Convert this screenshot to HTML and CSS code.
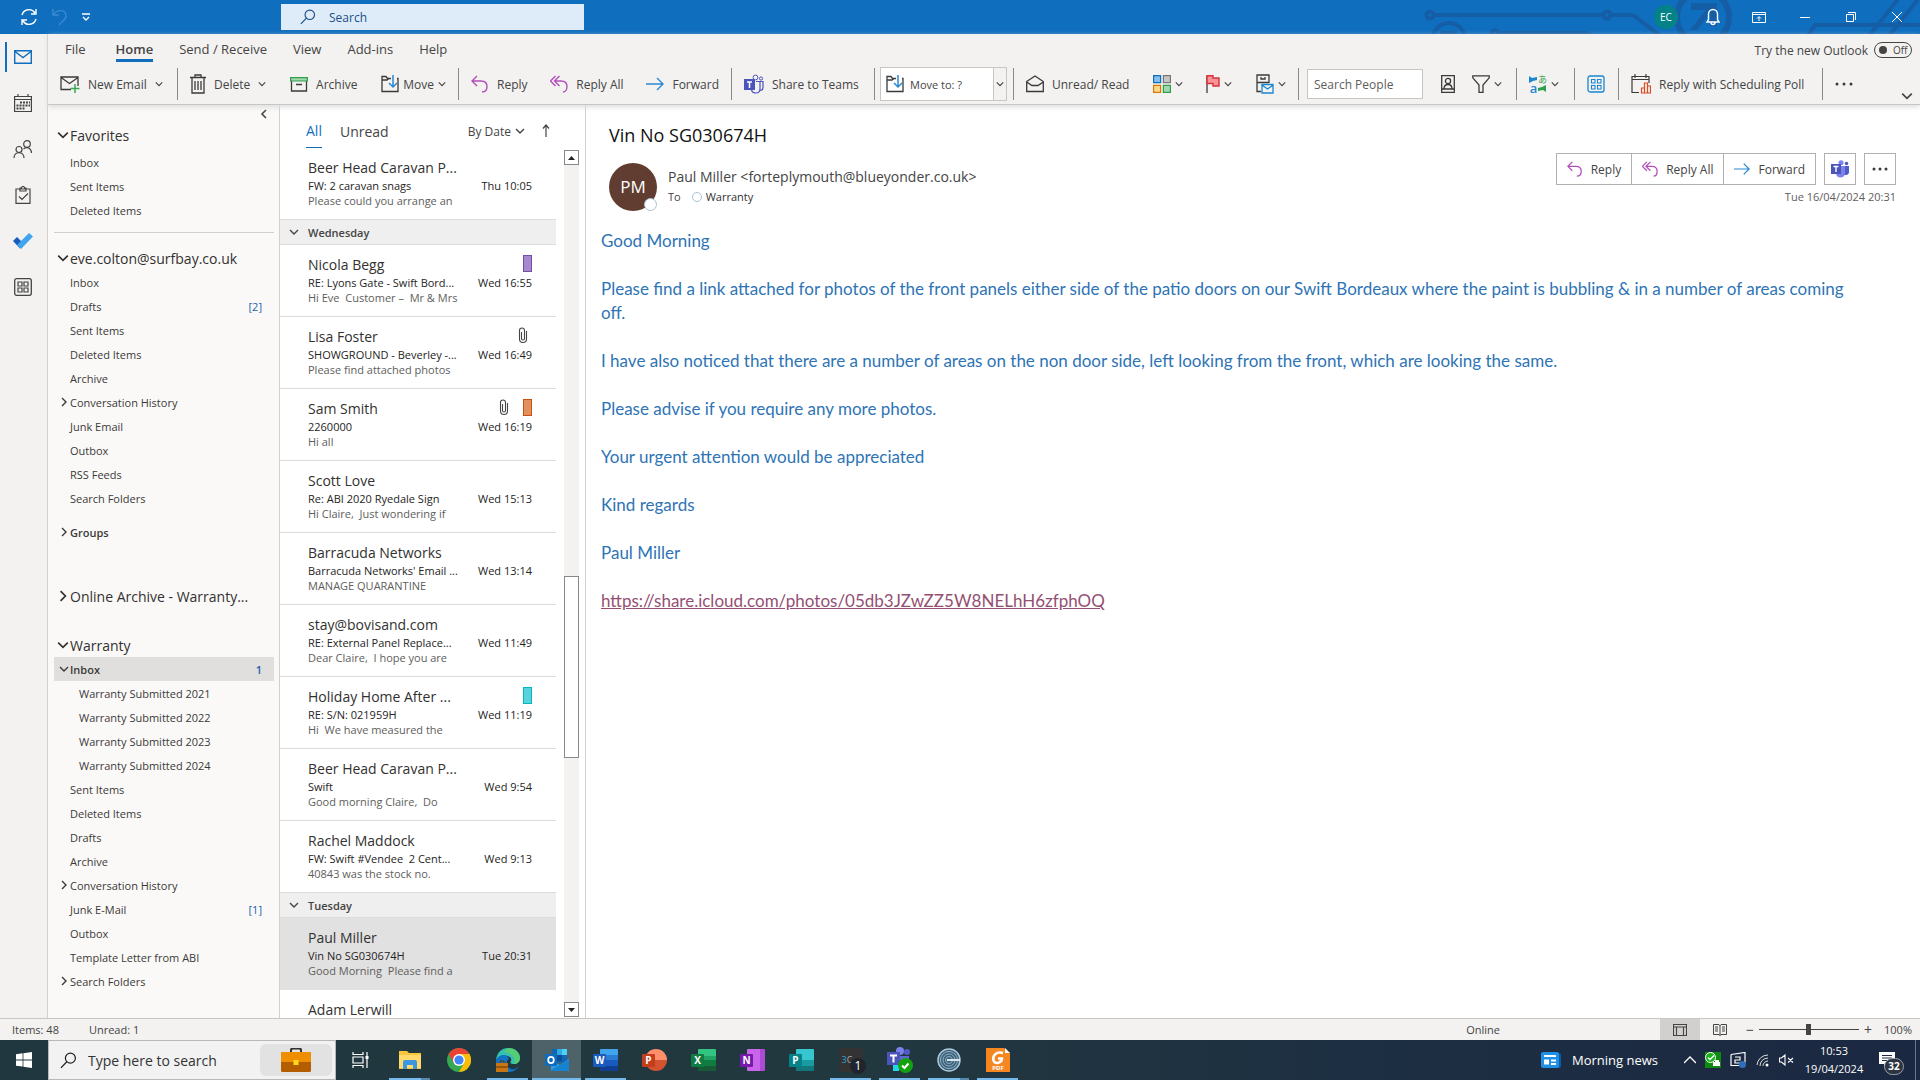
FILE: index.html
```html
<!DOCTYPE html>
<html lang="en">
<head>
  <meta charset="utf-8">
  <title>Warranty - Outlook</title>
  <link rel="stylesheet" href="styles.css">
</head>
<body>

<!-- shared icons -->
<svg class="sprite" aria-hidden="true">
  <symbol id="chev-down" viewBox="0 0 10 10"><path d="M1 3l4 4 4-4" fill="none" stroke="currentColor" stroke-width="1.4"/></symbol>
  <symbol id="chev-right" viewBox="0 0 10 10"><path d="M3 1l4 4-4 4" fill="none" stroke="currentColor" stroke-width="1.4"/></symbol>
  <symbol id="reply" viewBox="0 0 18 18"><path d="M6 1L1 6l5 5M1 6h9c4 0 6 2 6 5.500s-2 5.500-5 5.500" fill="none" stroke="#b04fb8" stroke-width="1.400"/></symbol>
  <symbol id="reply-all" viewBox="0 0 18 18"><path d="M5.500 1l-5 5 5 5M9.500 1l-5 5 5 5M5 6h6c4 0 6 2 6 5.500s-2 5.500-4 5.500" fill="none" stroke="#b04fb8" stroke-width="1.400"/></symbol>
  <symbol id="forward" viewBox="0 0 18 18"><path d="M0 9h17M11 3l6 6-6 6" fill="none" stroke="#2b88d0" stroke-width="1.400"/></symbol>
  <symbol id="move" viewBox="0 0 18 18"><path d="M10 3.500H6.500L5 1.500H1v15h16v-13h-1M1 5h5l2-1.500" fill="none" stroke="#3b3a39" stroke-width="1.300"/><path d="M12 0v12M8 8l4 4 4-4" fill="none" stroke="#2b88d0" stroke-width="1.500"/></symbol>
  <symbol id="clip" viewBox="0 0 10 17"><path d="M3.500 5v6.500a1.500 1.500 0 0 0 3 0V3.500a2.500 2.500 0 0 0-5 0V12a3.500 3.500 0 0 0 7 0V4" fill="none" stroke="#444" stroke-width="1.100"/></symbol>
  <symbol id="magnifier" viewBox="0 0 18 18"><circle cx="11" cy="6.500" r="5.300" fill="none" stroke="currentColor" stroke-width="1.300"/><path d="M7.200 10.300L1 16.800" fill="none" stroke="currentColor" stroke-width="1.300"/></symbol>
  <symbol id="teams" viewBox="0 0 20 20"><circle cx="11.500" cy="3.500" r="2.400" fill="none" stroke="#4b53bc"/><circle cx="17" cy="4.500" r="1.600" fill="none" stroke="#4b53bc"/><path d="M12 7.500h4v7c0 3-2 4.500-4 4.500s-4-1-4.500-3M16 7.500h3v6c0 2-1 3-3 3" fill="none" stroke="#4b53bc" stroke-width="1.200"/><path d="M0 5h11v11H0z" fill="#4b53bc"/><path d="M3 8h5M5.500 8v6" stroke="#fff" stroke-width="1.500"/></symbol>
</svg>

<header class="titlebar">
  <svg class="circuit" viewBox="0 0 500 34" aria-hidden="true">
    <g fill="none" stroke="#155ea6" stroke-width="4">
      <circle cx="10" cy="15" r="3.500"/><path d="M14 15h169M191 15h19q4 0 7 3l26 20M80 33h85l10 3"/><circle cx="187" cy="15" r="3.500"/><circle cx="29" cy="39" r="16"/><circle cx="75" cy="34" r="3.500"/><path d="M20 33h17"/><circle cx="283" cy="17" r="26" stroke-width="6"/>
      <path d="M386 38l9-13h105M449 36l30-38M469 36l30-38" stroke-width="4"/>
    </g>
    <path d="M271 3h26v23h-7V14l-13 16h-7l16-20h-15z" fill="#155ea6"/>
  </svg>
  <div class="quick">
    <button aria-label="Send/Receive all folders"><svg width="18" height="18" viewBox="0 0 18 18"><path d="M2 7a7.200 7.200 0 0 1 13-2M16 1v5h-5M16 11a7.200 7.200 0 0 1-13 2M2 17v-5h5" fill="none" stroke="#fff" stroke-width="1.400"/></svg></button>
    <button aria-label="Undo"><svg width="16" height="18" viewBox="0 0 16 18"><path d="M1 1v6h6M1 7c4-6 13-6 13 1 0 4-4 5-7 9" fill="none" stroke="#3b8ad2" stroke-width="1.400"/></svg></button>
    <button aria-label="Customize toolbar"><svg width="8" height="8" viewBox="0 0 8 8"><path d="M0 1h8M1 4l3 3 3-3" fill="none" stroke="#fff" stroke-width="1.300"/></svg></button>
  </div>
  <label class="top-search">
    <svg width="16" height="16"><use href="#magnifier"/></svg>
    <input type="text" placeholder="Search" aria-label="Search">
  </label>
  <div class="window-tools">
    <span class="account">EC</span>
    <button aria-label="Notifications"><svg width="14" height="18" viewBox="0 0 14 18"><path d="M1 14l1.500-2.500V6a4.500 4.500 0 0 1 9 0v5.500L13 14zM5 14.500a2 2 0 0 0 4 0" fill="none" stroke="#fff" stroke-width="1.400"/></svg></button>
    <button aria-label="Ribbon display"><svg width="14" height="11" viewBox="0 0 14 11"><path d="M.5.5h13v10H.5zM.5 2.500h13M7 9V5M5 6.500l2-2 2 2" fill="none" stroke="#fff"/></svg></button>
    <button aria-label="Minimize"><svg width="10" height="10" viewBox="0 0 10 10"><path d="M0 5.500h10" stroke="#fff"/></svg></button>
    <button aria-label="Restore"><svg width="10" height="10" viewBox="0 0 10 10"><path d="M.5 2.500h7v7h-7zM2 .5h7.500V8" fill="none" stroke="#fff"/></svg></button>
    <button aria-label="Close"><svg width="10" height="10" viewBox="0 0 10 10"><path d="M0 0l10 10M10 0L0 10" stroke="#fff"/></svg></button>
  </div>
</header>

<div class="app">
  <nav class="rail">
    <button class="active" aria-label="Mail"><svg width="18" height="14" viewBox="0 0 18 14"><path d="M.7.7h16.600v12.600H.7zM1 1.500l8 6 8-6" fill="none" stroke="#106ebe" stroke-width="1.400"/></svg></button>
    <button aria-label="Calendar"><svg width="18" height="18" viewBox="0 0 18 18"><path d="M.6 2.500h16.800v15H.6zM.6 5.500h16.800M4 0v3M14 0v3" fill="none" stroke="#444" stroke-width="1.200"/><path d="M6 8.500h10M2.500 11.500H16M2.500 14.500h8" stroke="#444" stroke-width="2" stroke-dasharray="2 1"/></svg></button>
    <button aria-label="People"><svg width="20" height="18" viewBox="0 0 20 18"><g fill="none" stroke="#444" stroke-width="1.200"><circle cx="14" cy="4" r="3.300"/><circle cx="6" cy="9.500" r="3"/><path d="M1 18c0-7 10-7 10 0M10.500 9c3-3 8-1 8 4"/></g></svg></button>
    <button aria-label="Tasks"><svg width="16" height="18" viewBox="0 0 16 18"><path d="M1 3h14v14.400H1zM5 5V2h1.500a1.500 1.500 0 0 1 3 0H11v3zM4 10.500l3 3 6-6" fill="none" stroke="#444" stroke-width="1.200"/></svg></button>
    <button aria-label="To Do"><svg width="20" height="16" viewBox="0 0 20 16"><path d="M0 8l4-4 7 7-4 4.500z" fill="#185abd"/><path d="M4 12L16 0l4 3.500L8 16z" fill="#41a5ee"/></svg></button>
    <button aria-label="More apps"><svg width="18" height="18" viewBox="0 0 18 18"><rect x=".7" y=".7" width="16.600" height="16.600" rx="2" fill="none" stroke="#444" stroke-width="1.300"/><path d="M4 4h4v4H4zM10 4h4v4h-4zM4 10h4v4H4zM10 10h4v4h-4z" fill="none" stroke="#444" stroke-width="1.200"/></svg></button>
  </nav>

  <div class="workspace">
    <div class="ribbon">
      <div class="tabs">
        <button>File</button>
        <button class="current">Home</button>
        <button>Send / Receive</button>
        <button>View</button>
        <button>Add-ins</button>
        <button>Help</button>
        <label class="try-new">Try the new Outlook <input type="checkbox"><span class="toggle">Off</span></label>
      </div>
      <div class="commands">
        <div class="group">
          <button><svg width="20" height="20" viewBox="0 0 20 20"><path d="M11 15.500H1V3h17v9M1 3.500l8.500 6 8.500-6" fill="none" stroke="#3b3a39" stroke-width="1.300"/><path d="M15 10v9M10.500 14.500h9" stroke="#3aa757" stroke-width="1.500"/></svg>New Email <svg class="chev"><use href="#chev-down"/></svg></button>
        </div>
        <div class="group">
          <button><svg width="16" height="20" viewBox="0 0 16 20"><path d="M0 3.500h16M5 3V1h6v2M2 4v15h12V4M5 7v9M8 7v9M11 7v9" fill="none" stroke="#3b3a39" stroke-width="1.300"/></svg>Delete <svg class="chev"><use href="#chev-down"/></svg></button>
          <button><svg width="18" height="16" viewBox="0 0 18 16"><path d="M1.500 5v10h15V5M6 8.500h6" fill="none" stroke="#3b3a39" stroke-width="1.300"/><path d="M.6 1.600h16.800V5H.6z" fill="#a0d8ae" stroke="#2f9e4f" stroke-width="1.200"/></svg>Archive</button>
          <button class="tight"><svg width="18" height="18"><use href="#move"/></svg>Move <svg class="chev"><use href="#chev-down"/></svg></button>
        </div>
        <div class="group">
          <button><svg width="18" height="18"><use href="#reply"/></svg>Reply</button>
          <button><svg width="18" height="18"><use href="#reply-all"/></svg>Reply All</button>
          <button><svg width="18" height="18"><use href="#forward"/></svg>Forward</button>
        </div>
        <div class="group">
          <button><svg width="20" height="20"><use href="#teams"/></svg>Share to Teams</button>
        </div>
        <div class="group group-box">
          <div class="move-to">
            <button><svg width="18" height="18"><use href="#move"/></svg>Move to: ?</button>
            <button class="drop" aria-label="More quick steps"><svg class="chev"><use href="#chev-down"/></svg></button>
          </div>
        </div>
        <div class="group">
          <button><svg width="18" height="18" viewBox="0 0 18 18"><path d="M.7 6.500L9 1l8.300 5.500v10H.7zM.7 7L6 10.500h6L17.300 7" fill="none" stroke="#3b3a39" stroke-width="1.300"/></svg>Unread/ Read</button>
          <button class="icon-drop" aria-label="Categorize"><svg width="18" height="18" viewBox="0 0 18 18"><path d="M.6.6h7v7h-7z" fill="#83beec" stroke="#106ebe" stroke-width="1.200"/><path d="M10.400.6h7v7h-7z" fill="#c8c6c4" stroke="#797775" stroke-width="1.200"/><path d="M.6 10.400h7v7h-7z" fill="#f8d98c" stroke="#e07800" stroke-width="1.200"/><path d="M10.400 10.400h7v7h-7z" fill="#a0d8ae" stroke="#2f9e4f" stroke-width="1.200"/></svg><svg class="chev"><use href="#chev-down"/></svg></button>
          <button class="icon-drop" aria-label="Follow up"><svg width="14" height="18" viewBox="0 0 14 18"><path d="M1 1v17" stroke="#3b3a39" stroke-width="1.300"/><path d="M1 .7h6v2.300h6v8H7V8.500H1z" fill="#ff9199" stroke="#d13438" stroke-width="1.400"/></svg><svg class="chev"><use href="#chev-down"/></svg></button>
          <button class="icon-drop" aria-label="Rules"><svg width="18" height="20" viewBox="0 0 18 20"><path d="M5 17.500H1V1h12v8M1 8.500h12M5 3v2h4V3" fill="none" stroke="#3b3a39" stroke-width="1.300"/><path d="M6 10.500h11v8.500H6zM6 11l5.500 4 5.500-4" fill="none" stroke="#1a86d0" stroke-width="1.300"/></svg><svg class="chev"><use href="#chev-down"/></svg></button>
        </div>
        <div class="group group-box">
          <input class="people" type="text" placeholder="Search People" aria-label="Search People">
          <button aria-label="Address Book"><svg width="14" height="18" viewBox="0 0 14 18"><path d="M.7.7h12.600v16.600H.7zM.7 14h12.600M3 14c0-6 8-6 8 0" fill="none" stroke="#3b3a39" stroke-width="1.300"/><circle cx="7" cy="6" r="2.600" fill="none" stroke="#3b3a39" stroke-width="1.300"/></svg></button>
          <button class="icon-drop" aria-label="Filter Email"><svg width="18" height="18" viewBox="0 0 18 18"><path d="M.8.8h16.400v2L11 10v7.300H7V10L.8 2.800z" fill="none" stroke="#3b3a39" stroke-width="1.300"/></svg><svg class="chev"><use href="#chev-down"/></svg></button>
        </div>
        <div class="group">
          <button class="icon-drop translate" aria-label="Translate"><span class="letters"><svg width="8" height="7" viewBox="0 0 8 7"><path d="M0 0l3 2 5-1v3L4 5 0 7z" fill="#1a86d0"/></svg><span class="tr-b">あ</span><span class="tr-a">a</span><svg width="8" height="7" viewBox="0 0 8 7"><path d="M8 7L5 5 0 6V3l4-1 4-2z" fill="#2f9e4f"/></svg></span><svg class="chev"><use href="#chev-down"/></svg></button>
        </div>
        <div class="group">
          <button aria-label="Get Add-ins"><svg width="18" height="18" viewBox="0 0 18 18"><rect x="1" y="1" width="16" height="16" rx="2" fill="none" stroke="#1a86d0" stroke-width="1.300"/><path d="M4.500 4.500h3.500v3.500H4.500zM10.500 4.500H14v3.500h-3.500zM4.500 10.500h3.500V14H4.500zM10.500 10.500H14V14h-3.500z" fill="none" stroke="#1a86d0" stroke-width="1.100"/></svg></button>
        </div>
        <div class="group">
          <button><svg width="20" height="20" viewBox="0 0 20 20"><path d="M8 18.500H1V2.500h17V9M1 5.500h17M4 0v4M15 0v4" fill="none" stroke="#3b3a39" stroke-width="1.200"/><path d="M10.500 19v-5h3v5M13.500 19V9h3v10M16.500 19v-7h3v7zM10 19h9" fill="none" stroke="#e0481d" stroke-width="1.200"/></svg>Reply with Scheduling Poll</button>
        </div>
        <div class="group last">
          <button aria-label="More commands"><svg width="18" height="4" viewBox="0 0 18 4"><g fill="#3b3a39"><circle cx="2" cy="2" r="1.500"/><circle cx="9" cy="2" r="1.500"/><circle cx="16" cy="2" r="1.500"/></g></svg></button>
          <button class="collapse" aria-label="Collapse ribbon"><svg width="12" height="12"><use href="#chev-down"/></svg></button>
        </div>
      </div>
    </div>

    <div class="panes">
      <nav class="folders">
        <button class="fold-pane" aria-label="Minimize folder pane"><svg width="8" height="10" viewBox="0 0 8 10"><path d="M6 1L2 5l4 4" fill="none" stroke="#444" stroke-width="1.600"/></svg></button>
        <h2><svg><use href="#chev-down"/></svg>Favorites</h2>
        <ul class="favorites">
          <li><a href="#">Inbox</a></li>
          <li><a href="#">Sent Items</a></li>
          <li><a href="#">Deleted Items</a></li>
        </ul>
        <hr>
        <h2><svg><use href="#chev-down"/></svg>eve.colton@surfbay.co.uk</h2>
        <ul>
          <li><a href="#">Inbox</a></li>
          <li><a href="#">Drafts</a><span>[2]</span></li>
          <li><a href="#">Sent Items</a></li>
          <li><a href="#">Deleted Items</a></li>
          <li><a href="#">Archive</a></li>
          <li><svg><use href="#chev-right"/></svg><a href="#">Conversation History</a></li>
          <li><a href="#">Junk Email</a></li>
          <li><a href="#">Outbox</a></li>
          <li><a href="#">RSS Feeds</a></li>
          <li><a href="#">Search Folders</a></li>
          <li class="groups"><svg><use href="#chev-right"/></svg><a href="#">Groups</a></li>
        </ul>
        <h2 class="archive"><svg><use href="#chev-right"/></svg>Online Archive - Warranty...</h2>
        <h2><svg><use href="#chev-down"/></svg>Warranty</h2>
        <ul>
          <li class="selected"><svg><use href="#chev-down"/></svg><a href="#">Inbox</a><span>1</span></li>
          <li class="sub"><a href="#">Warranty Submitted 2021</a></li>
          <li class="sub"><a href="#">Warranty Submitted 2022</a></li>
          <li class="sub"><a href="#">Warranty Submitted 2023</a></li>
          <li class="sub"><a href="#">Warranty Submitted 2024</a></li>
          <li><a href="#">Sent Items</a></li>
          <li><a href="#">Deleted Items</a></li>
          <li><a href="#">Drafts</a></li>
          <li><a href="#">Archive</a></li>
          <li><svg><use href="#chev-right"/></svg><a href="#">Conversation History</a></li>
          <li><a href="#">Junk E-Mail</a><span>[1]</span></li>
          <li><a href="#">Outbox</a></li>
          <li><a href="#">Template Letter from ABI</a></li>
          <li><svg><use href="#chev-right"/></svg><a href="#">Search Folders</a></li>
        </ul>
      </nav>

      <section class="messages">
        <div class="list-head">
          <button class="on">All</button>
          <button>Unread</button>
          <button class="sort">By Date <svg width="10" height="10"><use href="#chev-down"/></svg></button>
          <button class="order" aria-label="Sort order"><svg width="8" height="14" viewBox="0 0 8 14"><path d="M4 13V1M1 4.500L4 1l3 3.500" fill="none" stroke="#444" stroke-width="1.200"/></svg></button>
        </div>
        <div class="list-body">
          <div class="list">
            <article class="msg"><h3>Beer Head Caravan P...</h3><p class="subject">FW: 2 caravan snags</p><time>Thu 10:05</time><p class="preview">Please could you arrange an</p></article>
            <div class="day"><svg width="10" height="10"><use href="#chev-down"/></svg>Wednesday</div>
            <article class="msg"><h3>Nicola Begg</h3><span class="marks"><i class="cat purple"></i></span><p class="subject">RE: Lyons Gate - Swift Bord...</p><time>Wed 16:55</time><p class="preview">Hi Eve  Customer –  Mr &amp; Mrs</p></article>
            <article class="msg"><h3>Lisa Foster</h3><span class="marks only-clip"><svg width="10" height="17"><use href="#clip"/></svg></span><p class="subject">SHOWGROUND - Beverley -...</p><time>Wed 16:49</time><p class="preview">Please find attached photos</p></article>
            <article class="msg"><h3>Sam Smith</h3><span class="marks"><svg width="10" height="17"><use href="#clip"/></svg><i class="cat orange"></i></span><p class="subject">2260000</p><time>Wed 16:19</time><p class="preview">Hi all</p></article>
            <article class="msg"><h3>Scott Love</h3><p class="subject">Re: ABI 2020 Ryedale Sign</p><time>Wed 15:13</time><p class="preview">Hi Claire,  Just wondering if</p></article>
            <article class="msg"><h3>Barracuda Networks</h3><p class="subject">Barracuda Networks' Email ...</p><time>Wed 13:14</time><p class="preview">MANAGE QUARANTINE</p></article>
            <article class="msg"><h3>stay@bovisand.com</h3><p class="subject">RE: External Panel Replace...</p><time>Wed 11:49</time><p class="preview">Dear Claire,  I hope you are</p></article>
            <article class="msg"><h3>Holiday Home After ...</h3><span class="marks"><i class="cat teal"></i></span><p class="subject">RE: S/N: 021959H</p><time>Wed 11:19</time><p class="preview">Hi  We have measured the</p></article>
            <article class="msg"><h3>Beer Head Caravan P...</h3><p class="subject">Swift</p><time>Wed 9:54</time><p class="preview">Good morning Claire,  Do</p></article>
            <article class="msg"><h3>Rachel Maddock</h3><p class="subject">FW: Swift #Vendee  2 Cent...</p><time>Wed 9:13</time><p class="preview">40843 was the stock no.</p></article>
            <div class="day"><svg width="10" height="10"><use href="#chev-down"/></svg>Tuesday</div>
            <article class="msg open"><h3>Paul Miller</h3><p class="subject">Vin No SG030674H</p><time>Tue 20:31</time><p class="preview">Good Morning  Please find a</p></article>
            <article class="msg"><h3>Adam Lerwill</h3></article>
          </div>
          <div class="scrollbar">
            <button aria-label="Scroll up"><svg width="7" height="4" viewBox="0 0 7 4"><path d="M0 4l3.500-4L7 4z" fill="#222"/></svg></button>
            <div class="track"><div class="thumb"></div></div>
            <button aria-label="Scroll down"><svg width="7" height="4" viewBox="0 0 7 4"><path d="M0 0l3.500 4L7 0z" fill="#222"/></svg></button>
          </div>
        </div>
      </section>

      <main class="reading">
        <h1>Vin No SG030674H</h1>
        <div class="mail-head">
          <div class="avatar">PM<i class="presence"></i></div>
          <div class="from">
            <p class="sender">Paul Miller &lt;forteplymouth@blueyonder.co.uk&gt;</p>
            <p class="to">To <i class="dot"></i><b>Warranty</b></p>
          </div>
          <div class="mail-tools">
            <div class="actions">
              <div class="joined">
                <button><svg width="16" height="16"><use href="#reply"/></svg>Reply</button>
                <button><svg width="16" height="16"><use href="#reply-all"/></svg>Reply All</button>
                <button><svg width="16" height="16"><use href="#forward"/></svg>Forward</button>
              </div>
              <button class="square" aria-label="Share to Teams"><svg width="18" height="18" viewBox="0 0 18 18"><circle cx="10" cy="2.800" r="2.500" fill="#7b83eb"/><circle cx="15.500" cy="3.500" r="1.800" fill="#5059c9"/><path d="M13 6h5v6c0 2-1.500 3-3 3h-2z" fill="#5059c9"/><path d="M5 6h9v7c0 3-2 4.500-4.500 4.500S5 16 5 13z" fill="#7b83eb"/><path d="M0 4h10v10H0z" fill="#4b53bc"/><path d="M2.500 6.500h5M5 6.500v5.500" stroke="#fff" stroke-width="1.400"/></svg></button>
              <button class="square" aria-label="More actions"><svg width="16" height="4" viewBox="0 0 16 4"><g fill="#3b3a39"><circle cx="2" cy="2" r="1.500"/><circle cx="8" cy="2" r="1.500"/><circle cx="14" cy="2" r="1.500"/></g></svg></button>
            </div>
            <time>Tue 16/04/2024 20:31</time>
          </div>
        </div>
        <div class="mail-body">
          <p>Good Morning</p>
          <p>Please find a link attached for photos of the front panels either side of the patio doors on our Swift Bordeaux where the paint is bubbling &amp; in a number of areas coming off.</p>
          <p>I have also noticed that there are a number of areas on the non door side, left looking from the front, which are looking the same.</p>
          <p>Please advise if you require any more photos.</p>
          <p>Your urgent attention would be appreciated</p>
          <p>Kind regards</p>
          <p>Paul Miller</p>
          <p><a href="#">https://share.icloud.com/photos/05db3JZwZZ5W8NELhH6zfphOQ</a></p>
        </div>
      </main>
    </div>
  </div>
</div>

<footer class="status">
  <span>Items: 48</span>
  <span class="unread">Unread: 1</span>
  <span class="online">Online</span>
  <button class="view on" aria-label="Normal view"><svg width="14" height="12" viewBox="0 0 14 12"><path d="M.5.5h13v11H.5zM.5 3h13M3.500 3v8.500M10.500 3v8.500" fill="none" stroke="#444" stroke-width="1.100"/></svg></button>
  <button class="view" aria-label="Reading view"><svg width="14" height="12" viewBox="0 0 14 12"><path d="M.5.5H6l1 1 1-1h5.500v10H8l-1 1-1-1H.5zM7 1v11M2 3h3M2 5h3M2 7h3M9 3h3M9 5h3M9 7h3" fill="none" stroke="#444"/></svg></button>
  <button aria-label="Zoom out">−</button>
  <input type="range" min="10" max="190" value="100" aria-label="Zoom">
  <button aria-label="Zoom in">+</button>
  <span class="percent">100%</span>
</footer>

<div class="taskbar">
  <button class="start" aria-label="Start"><svg width="16" height="16" viewBox="0 0 16 16"><path d="M0 2.300L6.600 1.300v6.200H0zM7.400 1.200L16 0v7.500H7.400zM0 8.400h6.600v6.200L0 13.700zM7.400 8.400H16V16l-8.600-1.200z" fill="#fff"/></svg></button>
  <label class="task-search">
    <svg width="17" height="17"><use href="#magnifier"/></svg>
    <input type="text" placeholder="Type here to search" aria-label="Type here to search">
    <span class="highlight"><svg width="30" height="24" viewBox="0 0 30 24"><path d="M10 4V2c0-1 1-1.500 2-1.500h6c1 0 2 .5 2 1.500v2" fill="none" stroke="#333" stroke-width="2"/><rect y="4" width="30" height="20" rx="1.500" fill="#b35c00"/><path d="M0 5.500Q0 4 1.500 4h27Q30 4 30 5.500V14H0z" fill="#ef8e00"/><rect x="12.500" y="12" width="5" height="5" fill="#ffd91a"/></svg></span>
  </label>
  <div class="pinned">
    <button aria-label="Task View"><svg width="18" height="16" viewBox="0 0 18 16"><path d="M1 0v2.500h10V0M1 16v-2.500h10V16M1 5h10v6H1zM15 0v16" fill="none" stroke="#fff" stroke-width="1.200"/><path d="M13.500 4h3v3h-3z" fill="#fff"/></svg></button>
    <button class="run multi" aria-label="File Explorer"><svg width="24" height="20" viewBox="0 0 24 20"><path d="M1 1h8l2 2h12v16H1z" fill="#f8c63d"/><path d="M1 5h22v13H1z" fill="#ffd96b"/><path d="M5 19v-7q0-2 2-2h10q2 0 2 2v7h-4v-4H9v4z" fill="#3b97e0"/></svg></button>
    <button aria-label="Chrome"><svg width="24" height="24" viewBox="0 0 24 24"><circle cx="12" cy="12" r="12" fill="#34a853"/><path d="M12 0a12 12 0 0 1 10.400 6H12L6.800 15 1.600 6A12 12 0 0 1 12 0z" fill="#ea4335"/><path d="M22.400 6A12 12 0 0 1 12 24l5.200-9L17 8.500 12 6z" fill="#fbbc05"/><circle cx="12" cy="12" r="6" fill="#fff"/><circle cx="12" cy="12" r="4.600" fill="#4285f4"/></svg></button>
    <button class="run" aria-label="Edge"><svg width="24" height="24" viewBox="0 0 24 24"><path d="M0 12C1 4 6 0 12 0c8 0 12 5 12 10 0 4-3 6-6 6-4 0-4-2-3-3 2-5-9-9-15-1z" fill="#35c1b1"/><path d="M0 12C3 5 12 6 13 11c-3 1-4 8 2 10 3 1 6-1 8-3-3 5-7 6-11 6C5 24-.5 18 0 12z" fill="#1272c4"/><path d="M14 0c7 1 10 6 10 10 0 4-3 6-6 6 2-5-1-11-10-12 1-2 3-4 6-4z" fill="#62d25c" opacity=".7"/><rect y="15" width="12" height="9" fill="#c87512"/><path d="M4 15v-2h4v2M0 19h12" fill="none" stroke="#5e3408"/></svg></button>
    <button class="run current" aria-label="Outlook"><svg width="24" height="24" viewBox="0 0 24 24"><path d="M7 1h15v14H7z" fill="#1066b5"/><path d="M12 1h5v6h-5z" fill="#32a9e7"/><path d="M17 1h5v6h-5z" fill="#50d0f5"/><path d="M12 7h5v6h-5z" fill="#0a4f93"/><path d="M6 12l9 5 9-6v11q0 1-1 1H7q-1 0-1-1z" fill="#2a9fe5"/><path d="M6 22l18-10v10q0 1-1 1H7z" fill="#1583d0"/><rect y="6" width="12" height="12" rx="1" fill="#0f6cbd"/><ellipse cx="6" cy="12" rx="2.800" ry="3.200" fill="none" stroke="#fff" stroke-width="1.700"/></svg></button>
    <button class="run office word" aria-label="Word"><i>W</i></button>
    <button class="office ppt" aria-label="PowerPoint"><i>P</i></button>
    <button class="office excel" aria-label="Excel"><i>X</i></button>
    <button class="office onenote" aria-label="OneNote"><i>N</i></button>
    <button class="office publisher" aria-label="Publisher"><i>P</i></button>
    <button class="run phone" aria-label="3CX"><span><em>3</em>C</span><b>1</b></button>
    <button class="run" aria-label="Teams"><svg width="26" height="26" viewBox="0 0 26 26"><circle cx="13" cy="4" r="4" fill="#7b83eb"/><circle cx="20" cy="5" r="3" fill="#5059c9"/><path d="M8 9h14v8q-3 6-9 6-5-1-5-6z" fill="#6068d6"/><path d="M0 5h13v13H0z" fill="#4b53bc"/><path d="M3 8.500h7M6.500 8.500v7" stroke="#fff" stroke-width="2"/><path d="M6 18h6v6H6z" fill="#20d7e8"/><circle cx="18.500" cy="18.500" r="7.500" fill="#13a10e"/><path d="M15 18.500l2.500 2.500 4-4.500" fill="none" stroke="#fff" stroke-width="2"/></svg></button>
    <button class="run multi" aria-label="Remote client"><svg width="24" height="24" viewBox="0 0 24 24"><circle cx="12" cy="12" r="11" fill="#3d6076" stroke="#a9c9dc" stroke-width="1.500"/><g fill="none" stroke="#8fb3c8"><circle cx="12" cy="12" r="8.500"/><circle cx="12" cy="12" r="6"/><circle cx="12" cy="12" r="3.500"/></g><path d="M10 12h13" stroke="#d5e6f0" stroke-width="2"/></svg></button>
    <button class="run" aria-label="Foxit PDF"><svg width="24" height="24" viewBox="0 0 24 24"><path d="M0 0h18l6 5v19H0z" fill="#f6861f"/><path d="M19 0l5 5h-5z" fill="#fff"/><path d="M17 5c-7-2-11 3-9.500 7.500 2 4.500 8.500 2 8.500-2h-4" fill="none" stroke="#fff" stroke-width="2.500"/><text x="12" y="22" class="pdf">PDF</text></svg></button>
  </div>
  <div class="tray">
    <button class="news"><svg width="20" height="16" viewBox="0 0 20 16"><rect x="2" y="1" width="18" height="15" rx="2" fill="#0c59a4"/><rect width="18" height="16" rx="2" fill="#1f8fe8"/><path d="M3 4h12M10 8.500h5M10 12h5" stroke="#fff" stroke-width="2"/><rect x="3" y="7.500" width="5" height="5" fill="#fff"/></svg>Morning news</button>
    <svg width="12" height="8" viewBox="0 0 12 8"><path d="M0 7l6-6 6 6" fill="none" stroke="#fff" stroke-width="1.300"/></svg>
    <svg width="16" height="16" viewBox="0 0 16 16"><path d="M0 0h16v16H0z" fill="#0f8a10"/><circle cx="5.500" cy="5.500" r="5" fill="#18b41a" stroke="#fff"/><path d="M3 5.500l2 2 4-4" fill="none" stroke="#fff" stroke-width="1.300"/><path d="M8 10h7v4H8zM10 8h4v2h-4z" fill="#fff"/></svg>
    <svg width="17" height="16" viewBox="0 0 17 16"><path d="M1 2.500L15 .5v10M9 13.500H1v-11M5 5h5v3H5v3h6" fill="none" stroke="#fff" stroke-width="1.200"/><circle cx="12.500" cy="12.500" r="3.500" fill="#2f6fc0"/></svg>
    <svg width="14" height="14" viewBox="0 0 14 14"><path d="M1 12A11 11 0 0 1 12 2M4 13a8 8 0 0 1 8-8M7 13a5 5 0 0 1 5-5" fill="none" stroke="#ddd"/><circle cx="11" cy="12" r="1.500" fill="#fff"/></svg>
    <svg width="15" height="12" viewBox="0 0 15 12"><path d="M.5 4h2L6 1v10L2.500 8h-2zM9 4l5 4.500M14 4L9 8.500" fill="none" stroke="#fff" stroke-width="1.100"/></svg>
    <div class="clock">10:53<br>19/04/2024</div>
    <button class="action" aria-label="Notifications"><svg width="16" height="16" viewBox="0 0 16 16"><path d="M0 0h16v12H9l-4 4v-4H0z" fill="#fff"/><path d="M3 3.500h10M3 6h10M3 8.500h6" stroke="#1c2a40"/></svg><b>32</b></button>
  </div>
</div>

</body>
</html>
```

FILE: styles.css
```css
* {box-sizing: border-box}

body {
  margin: 0;
  height: 100vh;
  display: flex;
  flex-direction: column;
  overflow: hidden;
  font-family: "Open Sans", "Noto Sans", sans-serif;
  font-size: 12px;
  color: #444;
  background: #fff;
}

button {
  border: none;
  background: none;
  padding: 0;
  font: inherit;
  color: inherit;
  cursor: pointer;
}

h1, h2, h3, p, ul {
  margin: 0;
  padding: 0;
  font-weight: normal;
}

ul {list-style: none;}
a {color: inherit; text-decoration: none;}
i, em {font-style: normal;}
svg {display: block; flex: none;}
input {font: inherit; color: inherit;}
.sprite {position: absolute; width: 0; height: 0;}

/* title bar */
.titlebar {
  position: relative;
  display: flex;
  align-items: center;
  flex: none;
  height: 34px;
  background: #106ebe;
}

.circuit {
  position: absolute;
  right: 0;
  top: 0;
  width: 500px;
  height: 34px;
}

.quick {
  display: flex;
  align-items: center;
  gap: 14px;
  width: 281px;
  padding-left: 20px;
}

.top-search {
  display: flex;
  align-items: center;
  gap: 13px;
  width: 303px;
  height: 26px;
  padding-left: 19px;
  background: #deecf9;
  color: #1b4f86;
}

.top-search input, .task-search input {
  border: none;
  background: none;
  outline: none;
  padding: 0;
  min-width: 0;
  flex: 1;
}

.top-search input::placeholder {color: #1b4f86;}

.window-tools {
  position: relative;
  display: flex;
  align-items: center;
  margin-left: auto;
}

.window-tools button {
  width: 46px;
  height: 34px;
  display: flex;
  align-items: center;
  justify-content: center;
}

.account {
  width: 24px;
  height: 24px;
  margin-right: 12px;
  border-radius: 50%;
  background: #038387;
  color: #fff;
  font-size: 10px;
  line-height: 24px;
  text-align: center;
}

/* frame */
.app {
  display: flex;
  flex: 1;
  min-height: 0;
}

.rail {
  flex: none;
  width: 48px;
  padding-top: 8px;
  background: #f3f2f1;
  border-right: 1px solid #d2d0ce;
}

.rail button {
  display: flex;
  align-items: center;
  justify-content: center;
  width: 45px;
  height: 30px;
  margin-bottom: 16px;
}

.rail .active {
  width: 34px;
  margin-left: 5px;
  border-left: 2px solid #106ebe;
}

.workspace {
  flex: 1;
  min-width: 0;
  display: flex;
  flex-direction: column;
}

/* ribbon */
.ribbon {
  position: relative;
  flex: none;
  background: #f3f2f1;
  border-bottom: 1px solid #c8c6c4;
  box-shadow: 0 2px 5px #ddd;
  z-index: 1;
}

.tabs {
  display: flex;
  align-items: center;
  gap: 26px;
  height: 32px;
  padding: 0 8px 0 17px;
  font-size: 13px;
}

.tabs button {
  height: 24px;
  border-bottom: 3px solid transparent;
}

.tabs .current {
  border-color: #106ebe;
  font-weight: 600;
}

.tabs button:first-child {margin-right: 4px;}

.try-new {
  display: flex;
  align-items: center;
  gap: 6px;
  margin-left: auto;
  font-size: 12px;
}

.try-new input {
  position: absolute;
  opacity: 0;
}

.toggle {
  display: flex;
  align-items: center;
  gap: 6px;
  width: 38px;
  height: 16px;
  padding-left: 4px;
  border: 1px solid #444;
  border-radius: 8px;
  font-size: 10px;
}

.toggle::before {
  content: "";
  width: 8px;
  height: 8px;
  border-radius: 50%;
  background: #444;
}

.commands {
  display: grid;
  grid-template-columns: 130px 281px 273px 143px 139px 285px 218px 58px 44px 204px 1fr;
  padding: 2px 0 4px;
}

.group {
  display: flex;
  align-items: center;
  justify-content: space-between;
  height: 32px;
  padding: 0 12px;
  border-right: 1px solid #8a8886;
  white-space: nowrap;
}

.group button {
  display: flex;
  align-items: center;
  gap: 8px;
}

.group .tight, .group .icon-drop {gap: 4px;}
.chev {width: 8px; height: 8px;}
.group-box {padding: 0 6px 0 5px;}
.group-box .icon-drop {padding-right: 8px;}

.move-to {
  display: flex;
  flex: 1;
  height: 34px;
  border: 1px solid #c8c6c4;
  background: #fff;
}

.move-to button {flex: 1; padding-left: 5px; gap: 6px; font-size: 11px;}
.move-to .drop {flex: none; width: 13px; padding-left: 2px; border-left: 1px solid #c8c6c4; background: #f3f2f1;}

.people {
  width: 116px;
  height: 30px;
  margin-left: 3px;
  padding: 0 6px;
  border: 1px solid #c8c6c4;
  background: #fff;
}

.people::placeholder {color: #605e5c;}

.letters {
  display: grid;
  grid-template-columns: 9px 9px;
  grid-template-rows: 9px 9px;
  align-items: center;
  line-height: 9px;
}

.tr-a {color: #1a86d0; font-weight: 600; font-size: 13px;}
.tr-b {color: #2f9e4f; font-size: 9px; font-family: "Noto Sans CJK JP", sans-serif;}
.last {border: none; padding-right: 7px;}
.last .collapse {align-self: flex-end; height: 8px;}

/* folder pane */
.panes {
  display: flex;
  flex: 1;
  min-height: 0;
}

.folders {
  position: relative;
  flex: none;
  width: 232px;
  padding: 18px 5px 0 6px;
  background: #faf9f8;
  border-right: 1px solid #d2d0ce;
}

.fold-pane {
  position: absolute;
  right: 9px;
  top: 4px;
}

.folders h2, .folders li {
  display: flex;
  align-items: center;
  height: 24px;
  padding-left: 16px;
  font-size: 11px;
  color: #3b3a39;
}

.folders h2 {
  font-size: 14px;
  white-space: nowrap;
  color: #323130;
}

.folders svg {width: 10px; height: 10px; margin: 0 1px 0 -11px;}
.folders h2 svg {width: 12px; height: 12px; margin-left: -13px;}

.folders hr {
  margin: 10px 0 13px;
  border: none;
  border-top: 1px solid #d2d0ce;
}

.folders span {
  margin-left: auto;
  padding-right: 12px;
  color: #1f64ab;
}

.folders .favorites {margin-top: 3px;}
.folders .sub {padding-left: 25px;}
.folders .groups {margin-top: 10px; font-weight: 600;}
.folders .archive {margin: 40px 0 25px;}
.folders .selected {background: #e1dfdd; font-weight: 600;}

/* message list */
.messages {
  flex: none;
  width: 306px;
  display: flex;
  flex-direction: column;
  border-right: 1px solid #d2d0ce;
}

.list-head {
  display: flex;
  flex: none;
  align-items: center;
  height: 43px;
  padding: 12px 35px 0 26px;
  font-size: 14px;
}

.list-head button {
  height: 31px;
  padding-bottom: 3px;
  margin-right: 18px;
}

.list-head .on {
  color: #106ebe;
  border-bottom: 1px solid #106ebe;
}

.list-head .sort {
  display: flex;
  align-items: center;
  gap: 4px;
  margin-left: auto;
  margin-right: 17px;
  font-size: 12px;
}

.list-head .order {margin: 0;}

.list-body {
  display: flex;
  flex: 1;
  min-height: 0;
}

.list {
  flex: 1;
  overflow: hidden;
}

.msg {
  display: grid;
  grid-template-columns: 1fr auto;
  grid-template-rows: 20px 15px 15px;
  align-content: center;
  height: 72px;
  padding: 0 24px 2px 28px;
  border-bottom: 1px solid #dcdcdc;
  white-space: pre;
  font-size: 11px;
  line-height: 15px;
}

.msg h3 {
  grid-column: 1;
  font-size: 14px;
  line-height: 20px;
  color: #323130;
}

.msg p {grid-column: 1;}
.msg time {grid-column: 2; text-align: right; color: #252423;}
.subject {color: #252423;}
.preview {color: #605e5c;}

.marks {
  display: flex;
  justify-content: flex-end;
  gap: 14px;
  grid-column: 2;
}

.only-clip {padding-right: 4px;}

.cat {width: 9px; height: 17px; border: 1px solid;}
.purple {background: #a589cc; border-color: #744da9;}
.orange {background: #e3905f; border-color: #ca5010;}
.teal {background: #58d3db; border-color: #00b7c3;}

.open {background: #e1e1e1; border-color: #e1e1e1;}

.day {
  display: flex;
  align-items: center;
  gap: 9px;
  height: 25px;
  padding-left: 9px;
  background: #efefef;
  border-bottom: 1px solid #dcdcdc;
  font-size: 11px;
  font-weight: 600;
}

.scrollbar {
  display: flex;
  flex-direction: column;
  width: 15px;
  margin: 2px 6px 1px 8px;
  background: #f3f2f1;
}

.scrollbar button {
  display: flex;
  align-items: center;
  justify-content: center;
  height: 15px;
  border: 1px solid #8a8886;
  background: #fff;
}

.track {flex: 1; padding-top: 411px;}
.thumb {height: 182px; border: 1px solid #8a8886; background: #fff;}

/* reading pane */
.reading {
  flex: 1;
  min-width: 0;
  padding: 16px 24px 0 15px;
}

.reading h1 {
  padding-left: 8px;
  font-size: 18px;
  line-height: 28px;
  color: #111;
}

.mail-head {
  display: flex;
  height: 80px;
  padding: 4px 0 0 8px;
}

.avatar {
  position: relative;
  width: 48px;
  height: 48px;
  margin-top: 10px;
  border-radius: 50%;
  background: #603d30;
  color: #fff;
  font-size: 17px;
  line-height: 48px;
  text-align: center;
}

.presence {
  position: absolute;
  right: 0;
  bottom: 0;
  width: 13px;
  height: 13px;
  border: 1px solid #a9c3d3;
  border-radius: 50%;
  background: #fff;
}

.from {
  flex: 1;
  padding: 14px 0 0 11px;
}

.sender {font-size: 14px; line-height: 20px;}
.to {display: flex; align-items: center; font-size: 11px; line-height: 19px;}
.to b {font-weight: normal; color: #323130;}
.dot {width: 10px; height: 10px; margin: 0 4px 0 11px; border: 1px solid #a9c3d3; border-radius: 50%;}

.mail-tools {text-align: right; color: #605e5c; line-height: 23px; font-size: 11px;}
.actions {display: flex; gap: 8px;}

.joined {
  display: flex;
  border: 1px solid #b3b0ad;
}

.actions button {
  display: flex;
  align-items: center;
  justify-content: center;
  gap: 8px;
  height: 30px;
  padding: 0 10px;
  color: #444;
  font-size: 12px;
}

.joined button + button {border-left: 1px solid #b3b0ad;}
.actions .square {width: 32px; height: 32px; padding: 0; border: 1px solid #b3b0ad;}

.mail-body {
  padding-right: 32px;
  font-family: Lato, "Open Sans", sans-serif;
  font-size: 17px;
  line-height: 24px;
  color: #2e74b5;
}

.mail-body p {margin-bottom: 24px;}
.mail-body a {color: #954f72; text-decoration: underline;}

/* status bar */
.status {
  display: flex;
  flex: none;
  align-items: center;
  height: 22px;
  padding: 0 8px 0 12px;
  background: #f3f2f1;
  border-top: 1px solid #c8c6c4;
  font-size: 11px;
}

.unread {margin-left: 30px;}
.online {margin: 0 160px 0 auto;}

.view {
  display: flex;
  align-items: center;
  justify-content: center;
  width: 40px;
  height: 21px;
}

.view.on {background: #d2d0ce;}
.status button {font-size: 14px;}
.percent {width: 40px; text-align: right;}

.status input {
  appearance: none;
  width: 100px;
  height: 1px;
  margin: 0 5px;
  background: #444;
}

.status input::-webkit-slider-thumb {
  appearance: none;
  width: 5px;
  height: 11px;
  background: #444;
}

.view + button {margin-left: 6px;}
.view + .view {margin-left: 0;}

/* taskbar */
.taskbar {
  display: flex;
  flex: none;
  height: 40px;
  color: #fff;
  background: linear-gradient(90deg, #21373f, #22383f 45%, #1d2f42 70%, #1b2842);
}

.taskbar button {
  display: flex;
  align-items: center;
  justify-content: center;
}

.start {width: 48px;}

.task-search {
  display: flex;
  align-items: center;
  gap: 11px;
  width: 288px;
  padding: 0 3px 0 11px;
  border: 1px solid #b8b8b8;
  background: #f2f2f2;
  color: #222;
  font-size: 14px;
}

.task-search input::placeholder {color: #333;}

.highlight {
  display: flex;
  align-items: center;
  justify-content: center;
  width: 72px;
  height: 32px;
  border-radius: 6px;
  background: #e2e2e2;
}

.pinned {display: flex;}
.pinned button {position: relative; width: 49px;}
.pinned .current {background: #4d6269;}

.run::after {
  content: "";
  position: absolute;
  left: 4px;
  right: 4px;
  bottom: 0;
  height: 2px;
  background: #76b9ed;
}

.run.current::after {left: 0; right: 0;}
.multi::after {border-right: 9px solid #5788ad;}

/* Office tiles: coloured page with a letter badge */
.office::before {
  content: "";
  width: 18px;
  height: 22px;
  margin-left: 6px;
  border-radius: 1px;
}

.office i {
  position: absolute;
  left: 12px;
  top: 14px;
  width: 13px;
  height: 13px;
  border-radius: 1px;
  font-size: 10px;
  font-weight: 700;
  line-height: 13px;
  text-align: center;
}

.word::before {background: linear-gradient(#41a5ee 27%, #2b7cd3 27% 52%, #185abd 52% 76%, #103f91 76%);}
.word i {background: #185abd;}
.ppt::before {width: 22px; margin-left: 2px; border-radius: 50%; background: linear-gradient(#ff8f6b 50%, #d35230 50%);}
.ppt i {background: #c43e1c;}
.excel::before {background: linear-gradient(#33c481 33%, #21a366 33% 52%, #107c41 52% 76%, #185c37 76%);}
.excel i {background: #107c41;}
.onenote::before {background: linear-gradient(90deg, #ca64ea 75%, #ae4bd5 75%);}
.onenote i {background: #7719aa;}
.publisher::before {background: linear-gradient(#37c6d0 52%, #1a9ba1 52% 76%, #12777b 76%);}
.publisher i {background: #038387;}

.phone span {width: 24px; height: 24px; padding-left: 3px; background: #333; font-size: 9px; line-height: 24px; color: #aaa; text-align: left;}
.phone em {color: #2ba3d8;}

.phone b {
  position: absolute;
  left: 24px;
  top: 18px;
  width: 16px;
  height: 16px;
  border-radius: 50%;
  background: #20242c;
  font-weight: normal;
  line-height: 16px;
}

.pdf {font: 700 6px "Open Sans", sans-serif; fill: #fff; text-anchor: middle;}

.tray {
  display: flex;
  align-items: center;
  gap: 9px;
  margin-left: auto;
  padding-right: 4px;
}

.news {gap: 11px; margin-right: 17px; font-size: 13px;}
.clock {width: 62px; font-size: 11px; line-height: 18px; text-align: center;}

.action {
  position: relative;
  width: 42px;
  height: 40px;
  border-right: 1px solid #6b7587;
}

.taskbar .action {padding-right: 16px;}

.action b {
  position: absolute;
  left: 10px;
  top: 18px;
  width: 20px;
  height: 17px;
  border: 1px solid #9aa0aa;
  border-radius: 9px;
  background: #2b3440;
  font-size: 10px;
  line-height: 15px;
}
```
